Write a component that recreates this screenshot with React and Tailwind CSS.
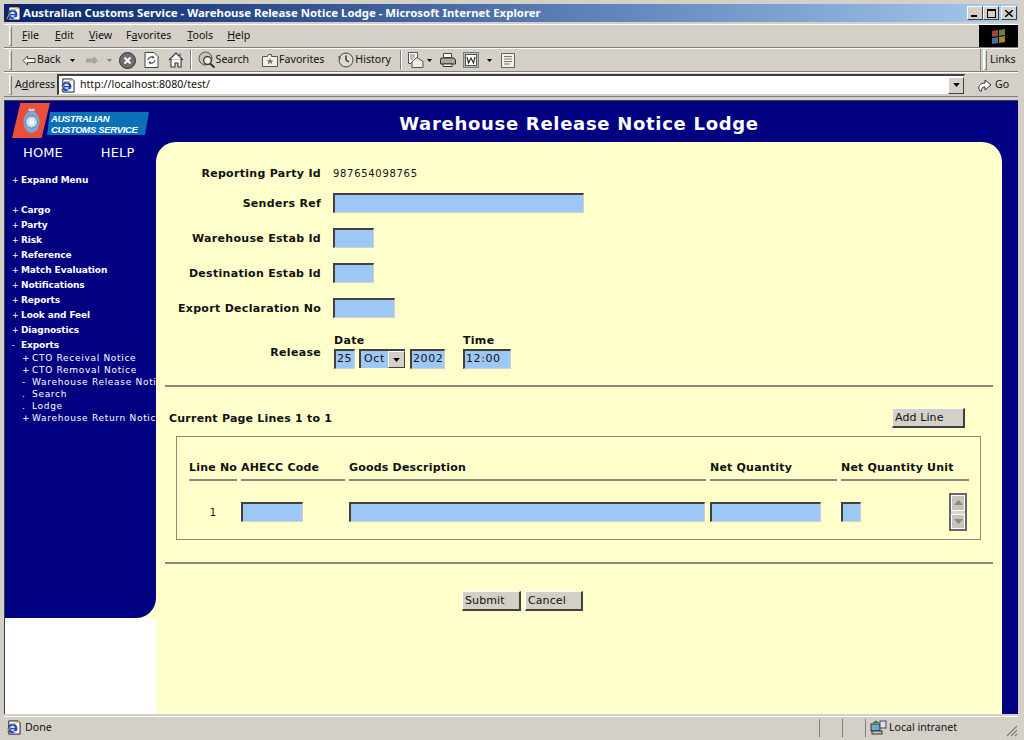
import React from "react";

const UI = { fontFamily: '"Noto Sans", "Open Sans", sans-serif' };
const WEB = { fontFamily: '"DejaVu Sans", Verdana, sans-serif' };

function IeIcon({ s = 16 }) {
  return (
    <svg width={s} height={s} viewBox="0 0 16 16" className="shrink-0">
      <path d="M3 1h10l2 2v12H3z" fill="#fff" stroke="#111" strokeWidth="1" />
      <circle cx="7" cy="9" r="5.2" fill="#1c48c8" />
      <circle cx="7" cy="9" r="2.6" fill="#fff" />
      <rect x="3" y="8.4" width="8" height="1.6" fill="#1c48c8" />
      <path d="M8 12h4v1.4H8z" fill="#fff" />
      <path d="M1 14C3 8 8 3 14 2" fill="none" stroke="#e8b020" strokeWidth="1" />
    </svg>
  );
}
const Grip = () => <div className="w-[3px] h-[20px] border-l border-t border-white border-r border-r-[#808080] border-b border-b-[#808080] shrink-0" />;
const Sep = () => <div className="w-[2px] h-[20px] border-l border-[#808080] bg-white shrink-0" />;
const Caret = ({ c = "#000", big }) => (
  <svg width={big ? 7 : 5} height={big ? 4 : 3} viewBox="0 0 5 3" className="shrink-0"><path d="M0 0h5L2.5 3z" fill={c} /></svg>
);

function WinBtn({ children }) {
  return <div className="w-[16px] h-[14px] bg-[#d4d0c8] border border-t-white border-l-white border-r-[#404040] border-b-[#404040] flex items-center justify-center">{children}</div>;
}

function Menu({ pre, u, post, ml }) {
  return <span className={ml}>{pre}<span className="underline">{u}</span>{post}</span>;
}

function Field({ w, h = "h-[20px]", children }) {
  return (
    <div className={`${w} ${h} bg-[#9dc8f5] border-t-2 border-l-2 border-t-[#404040] border-l-[#404040] border-r border-b border-r-[#d4d0c8] border-b-[#d4d0c8] text-[11px] tracking-[0.6px] text-[#111] leading-[16px] pl-[1px] overflow-hidden shrink-0`}>
      {children}
    </div>
  );
}

function Btn({ w, children }) {
  return (
    <div className={`${w} h-[20px] bg-[#d4d0c8] border border-t-white border-l-white border-r-[#404040] border-b-[#404040] border-r-2 border-b-2 text-[11px] tracking-[0.1px] text-[#111] flex items-center shrink-0 pl-[2px] pt-[1px]`}>
      {children}
    </div>
  );
}

const Label = ({ children }) => (
  <div className="w-[165px] text-right font-bold text-[11px] tracking-[0.3px] text-[#111] shrink-0 pt-[2px]">{children}</div>
);

function Row({ label, mt, children }) {
  return (
    <div className={`flex items-center gap-[12px] ${mt}`}>
      <Label>{label}</Label>
      {children}
    </div>
  );
}

const menuTop = ["Cargo", "Party", "Risk", "Reference", "Match Evaluation", "Notifications", "Reports", "Look and Feel", "Diagnostics"];
const menuSub = [["+", "CTO Receival Notice"], ["+", "CTO Removal Notice"], ["-", "Warehouse Release Notice"], [".", "Search"], [".", "Lodge"], ["+", "Warehouse Return Notice"]];

const TopItem = ({ sign = "+", children }) => (
  <div className="h-[15px] flex items-center font-bold text-[9px] tracking-[-0.1px] text-white whitespace-nowrap">
    <span className="w-[9px] pl-[1px] font-normal text-[8px] shrink-0">{sign}</span>
    <span className="ml-[1px]">{children}</span>
  </div>
);

const Head = ({ children }) => (
  <div className="border-b-2 border-b-[#8a8a78] h-[30px] pb-[3px] flex items-end font-bold text-[11px] tracking-[0.2px] text-[#111] whitespace-nowrap">{children}</div>
);

export default function App() {
  return (
    <div className="w-[1024px] h-[740px] bg-[#d4d0c8] overflow-hidden flex flex-col pt-[4px] pl-[4px] pr-[6px] pb-[2px]" style={UI}>
      {/* title bar */}
      <div className="h-[18px] shrink-0 flex items-center pl-[2px] pr-[1px] bg-gradient-to-r from-[#0a246a] to-[#a6caf0]">
        <IeIcon s={15} />
        <span className="ml-[2px] font-bold text-[11.4px] text-white whitespace-nowrap">Australian Customs Service - Warehouse Release Notice Lodge - Microsoft Internet Explorer</span>
        <div className="ml-auto flex items-center">
          <WinBtn><div className="w-[6px] h-[2px] bg-black mt-[6px] mr-[2px]" /></WinBtn>
          <WinBtn><div className="w-[9px] h-[9px] border border-black border-t-2" /></WinBtn>
          <div className="ml-[2px]"><WinBtn><svg width="8" height="7" viewBox="0 0 8 7"><path d="M0 0l8 7M8 0L0 7" stroke="#000" strokeWidth="1.4" /></svg></WinBtn></div>
        </div>
      </div>

      {/* menu row */}
      <div className="h-[24px] mt-[2px] shrink-0 flex items-center border-t border-white text-[10.6px] text-[#111] border-b border-b-[#808080]">
        <div className="ml-[5px]"><Grip /></div>
        <Menu ml="ml-[10px]" pre="" u="F" post="ile" />
        <Menu ml="ml-[16px]" pre="" u="E" post="dit" />
        <Menu ml="ml-[15px]" pre="" u="V" post="iew" />
        <Menu ml="ml-[14px]" pre="F" u="a" post="vorites" />
        <Menu ml="ml-[16px]" pre="" u="T" post="ools" />
        <Menu ml="ml-[14px]" pre="" u="H" post="elp" />
        <div className="ml-auto w-[39px] h-[22px] bg-black flex items-center justify-center">
          <svg width="16" height="15" viewBox="0 0 16 15">
            <path d="M1 2l6-1v6l-6 1z" fill="#c8584c" opacity="0.8" />
            <path d="M8 1l6-1v6l-6 1z" fill="#7ea04a" opacity="0.8" />
            <path d="M1 9l6-1v6l-6 1z" fill="#5c88c8" opacity="0.8" />
            <path d="M8 8l6-1v6l-6 1z" fill="#d0a838" opacity="0.8" />
          </svg>
        </div>
      </div>

      {/* toolbar */}
      <div className="h-[24px] shrink-0 flex items-center border-t border-white border-b border-b-[#808080] text-[10.6px] text-[#111]">
        <div className="ml-[5px]"><Grip /></div>
        <svg className="ml-[10px]" width="14" height="11" viewBox="0 0 14 11"><path d="M5.5 1L1 5.5 5.5 10V7.5H13v-4H5.5z" fill="#fff" stroke="#444" /></svg>
        <span className="ml-[1px]">Back</span>
        <div className="ml-[9px]"><Caret /></div>
        <svg className="ml-[10px]" width="14" height="11" viewBox="0 0 14 11"><path d="M8.5 1L13 5.5 8.5 10V7.5H1v-4h7.5z" fill="#a8a49c" /></svg>
        <div className="ml-[8px]"><Caret c="#808080" /></div>
        <svg className="ml-[7px]" width="17" height="17" viewBox="0 0 17 17"><circle cx="8.5" cy="8.5" r="8" fill="#6e6e6e" stroke="#333" /><path d="M5.5 5.5l6 6M11.5 5.5l-6 6" stroke="#fff" strokeWidth="2" /></svg>
        <svg className="ml-[8px]" width="15" height="16" viewBox="0 0 15 16"><path d="M1 .5h9l4 4v11H1z" fill="#fff" stroke="#444" /><path d="M4 8a3.5 3.5 0 0 1 6-2M11 8a3.5 3.5 0 0 1-6 2" fill="none" stroke="#555" strokeWidth="1.2" /><path d="M9 3.5l1.5 3-3-.5zM6 12.500l-1.500-3 3 .5z" fill="#555" /></svg>
        <svg className="ml-[9px]" width="16" height="16" viewBox="0 0 16 16"><path d="M1 8l7-7 7 7M3 7v8h4v-4h3v4h3V7" fill="#fff" stroke="#333" strokeWidth="1.1" /><rect x="11" y="1.500" width="2" height="4" fill="#777" /></svg>
        <div className="ml-[6px]"><Sep /></div>
        <svg className="ml-[6px]" width="18" height="18" viewBox="0 0 18 18"><circle cx="7.500" cy="7.500" r="6.500" fill="#c4c4bc" stroke="#555" /><circle cx="9.500" cy="9.500" r="3.800" fill="#e8f0f0" stroke="#333" strokeWidth="1.300" /><path d="M12 12.500l4.500 4" stroke="#333" strokeWidth="2" /></svg>
        <span>Search</span>
        <svg className="ml-[13px]" width="16" height="14" viewBox="0 0 16 14"><path d="M.5 3.500h5l1-2h3v2h6v10H.5z" fill="#f4f0e4" stroke="#555" /><path d="M8 5l1 2.300 2.400.2-1.800 1.500.6 2.300L8 9.800 5.800 11.300l.6-2.300-1.800-1.500 2.400-.2z" fill="#777" /></svg>
        <span className="ml-[1px]">Favorites</span>
        <svg className="ml-[13px]" width="18" height="16" viewBox="0 0 18 16"><circle cx="9" cy="8" r="7" fill="#dcdcd4" stroke="#444" /><path d="M9 3.500V8l3 2" fill="none" stroke="#222" strokeWidth="1.300" /><path d="M1 4l3 1-1 3z" fill="#555" /></svg>
        <span>History</span>
        <div className="ml-[9px]"><Sep /></div>
        <svg className="ml-[6px]" width="17" height="16" viewBox="0 0 17 16"><path d="M.5.5h9v6h-2L3 11.500H.5z" fill="#fff" stroke="#555" /><path d="M2 3h5M2 5h5M2 7h3" stroke="#777" /><path d="M4 9.500l5-4 6 4v6H4z" fill="#f0ece0" stroke="#555" /></svg>
        <div className="ml-[2px]"><Caret /></div>
        <svg className="ml-[8px]" width="16" height="14" viewBox="0 0 16 14"><path d="M3.500.5h8v4h-8z" fill="#fff" stroke="#444" /><path d="M1 5h13l1.500 2v4H.5V7z" fill="#a8a8a0" stroke="#333" /><path d="M3 11h9v2.500H3z" fill="#fff" stroke="#333" /></svg>
        <svg className="ml-[7px]" width="16" height="16" viewBox="0 0 16 16"><rect x=".5" y=".5" width="15" height="15" fill="#b8b8b0" stroke="#333" strokeDasharray="1 1" /><rect x="2.500" y="2.500" width="11" height="11" fill="#fff" stroke="#555" /><path d="M4 5l1.500 6L8 6l2.500 5L12 5" fill="none" stroke="#333" strokeWidth="1.200" /></svg>
        <div className="ml-[8px]"><Caret /></div>
        <svg className="ml-[9px]" width="14" height="15" viewBox="0 0 14 15"><path d="M.5.5h13v14H.5z" fill="#f4f0e4" stroke="#666" /><path d="M3 3.500h8M3 6h8M3 8.500h8M3 11h6" stroke="#777" /></svg>
        <div className="ml-auto flex items-center h-full border-l border-[#808080] pl-[2px] w-[38px]">
          <div className="border-l border-white"><Grip /></div>
          <span className="ml-[3px]">Links</span>
        </div>
      </div>

      {/* address row */}
      <div className="h-[25px] shrink-0 flex items-center border-t border-white border-b border-b-[#808080] text-[10.6px] text-[#111]">
        <div className="ml-[5px]"><Grip /></div>
        <span className="ml-[3px] w-[39px]">A<span className="underline">d</span>dress</span>
        <div className="ml-[3px] w-[908px] h-[21px] bg-white border-t-2 border-l-2 border-t-[#404040] border-l-[#404040] border-b border-r border-[#d4d0c8] flex items-center pl-[1px]">
          <IeIcon s={15} />
          <span className="ml-[5px] whitespace-nowrap">http://localhost:8080/test/</span>
          <div className="ml-auto w-[16px] h-[17px] bg-[#d4d0c8] border border-t-white border-l-white border-r-[#404040] border-b-[#404040] flex items-center justify-center"><Caret big /></div>
        </div>
        <svg className="ml-[12px]" width="17" height="17" viewBox="0 0 17 17"><path d="M3 15c-3-4 0-8 5-8V4l6 5-6 5v-3C5 11 4 13 4.500 15z" fill="#fff" stroke="#333" /></svg>
        <span className="ml-[1px]">Go</span>
      </div>

      {/* content */}
      <div className="h-[614px] mt-[3px] shrink-0 flex border-l border-l-[#404040] border-t border-t-[#404040] overflow-hidden">
        {/* sidebar */}
        <div className="w-[151px] shrink-0 flex flex-col bg-white" style={WEB}>
          <div className="h-[517px] bg-[#ffffcc] shrink-0">
            <div className="h-full bg-[#000080] rounded-br-[20px] flex flex-col overflow-hidden">
              {/* logo */}
              <div className="h-[38px] mt-[2px] ml-[7px] shrink-0 flex items-start">
                <div className="w-[38px] h-[35px] bg-[#e8503c] [clip-path:polygon(22%_0,100%_0,78%_100%,0_100%)] flex items-center justify-center shrink-0">
                  <svg width="17" height="27" viewBox="0 0 17 27">
                    <path d="M5 4l1.500-3 2 1.500 2-1.500L12 4z" fill="#c8d8e8" />
                    <ellipse cx="8.500" cy="15" rx="8" ry="11" fill="#7ea8d0" />
                    <circle cx="8.500" cy="15" r="6" fill="#c8dcec" stroke="#5a88b8" />
                    <circle cx="8.500" cy="15" r="3" fill="#f4f8fb" />
                  </svg>
                </div>
                <div className="-ml-[3px] mt-[9px] w-[102px] h-[23px] bg-[#0a70b8] [clip-path:polygon(3%_0,100%_0,96%_100%,0_100%)] pl-[4px] pt-[1px] text-white italic font-bold text-[9.5px] tracking-[-0.35px] leading-[11px] whitespace-nowrap" style={{ fontFamily: '"Liberation Sans", Arial, sans-serif' }}>
                  <div>AUSTRALIAN</div>
                  <div>CUSTOMS SERVICE</div>
                </div>
              </div>
              <div className="mt-[3px] h-[18px] flex items-center text-white text-[13px] tracking-[0.1px] whitespace-nowrap shrink-0">
                <span className="ml-[18px]">HOME</span>
                <span className="ml-[38px]">HELP</span>
              </div>
              <div className="mt-[11px] ml-[6px] shrink-0"><TopItem>Expand Menu</TopItem></div>
              <div className="mt-[15px] ml-[6px] shrink-0 flex flex-col">
                {menuTop.map((m) => <TopItem key={m}>{m}</TopItem>)}
                <TopItem sign="-">Exports</TopItem>
              </div>
              <div className="ml-[16px] flex flex-col text-[9px] tracking-[0.7px] text-white">
                {menuSub.map(([s, t]) => (
                  <div key={t} className="h-[12px] flex items-center whitespace-nowrap">
                    <span className="w-[11px] pl-[1px] shrink-0">{s}</span><span className="shrink-0">{t}</span>
                  </div>
                ))}
              </div>
            </div>
          </div>
        </div>

        {/* main column */}
        <div className="flex-1 min-w-0 flex flex-col bg-[#000080] pr-[16px]" style={WEB}>
          <div className="h-[41px] shrink-0 flex items-center justify-center text-white font-bold text-[18px] tracking-[0.7px] whitespace-nowrap pt-[3px]">Warehouse Release Notice Lodge</div>
          <div className="flex-1 bg-[#ffffcc] rounded-t-[20px] flex flex-col pl-[9px] pr-[9px] pt-[21px]">
            <div className="-ml-[9px] flex flex-col">
              <Row label="Reporting Party Id"><span className="text-[10px] tracking-[0.7px] text-[#111] h-[20px] leading-[18px] pt-[2px]">987654098765</span></Row>
              <Row label="Senders Ref" mt="mt-[10px]"><Field w="w-[251px]" /></Row>
              <Row label="Warehouse Estab Id" mt="mt-[15px]"><Field w="w-[41px]" /></Row>
              <Row label="Destination Estab Id" mt="mt-[15px]"><Field w="w-[41px]" /></Row>
              <Row label="Export Declaration No" mt="mt-[15px]"><Field w="w-[62px]" /></Row>
              <div className="flex items-center gap-[12px] mt-[15px]">
                <div className="mt-[3px]"><Label>Release</Label></div>
                <div className="flex flex-col ml-[1px]">
                  <div className="flex font-bold text-[11px] tracking-[0.3px] text-[#111] h-[14px] leading-[14px] pt-[1px]">
                    <span className="w-[129px]">Date</span><span>Time</span>
                  </div>
                  <div className="flex mt-[2px]">
                    <Field w="w-[21px]">25</Field>
                    <div className="ml-[4px] w-[46px] h-[19px] bg-[#9dc8f5] border-t-2 border-l-2 border-[#404040] flex items-center justify-between text-[11px] tracking-[0.6px] text-[#111] shrink-0 pl-[3px]">
                      Oct
                      <div className="w-[17px] h-[17px] bg-[#d4d0c8] border border-t-white border-l-white border-r-[#404040] border-b-[#404040] flex items-center justify-center"><Caret big /></div>
                    </div>
                    <div className="ml-[5px]"><Field w="w-[35px]">2002</Field></div>
                    <div className="ml-[18px]"><Field w="w-[48px]">12:00</Field></div>
                  </div>
                </div>
              </div>
            </div>

            <div className="mt-[16px] border-t-2 border-t-[#8a8a78]" />

            <div className="mt-[20px] h-[22px] flex items-center pl-[4px] pr-[28px] justify-between">
              <span className="font-bold text-[11px] tracking-[0.22px] text-[#111] pt-[2px]">Current Page Lines 1 to 1</span>
              <Btn w="w-[73px]">Add Line</Btn>
            </div>

            <div className="mt-[7px] ml-[11px] mr-[12px] h-[104px] border border-[#8a8a78] pl-[12px] pt-[14px]">
              <div className="grid grid-cols-[48px_104px_357px_127px_128px] gap-x-[4px]">
                <Head>Line No</Head>
                <Head>AHECC Code</Head>
                <Head>Goods Description</Head>
                <Head>Net Quantity</Head>
                <Head>Net Quantity Unit</Head>
              </div>
              <div className="grid grid-cols-[48px_104px_357px_127px_128px] gap-x-[4px] mt-[21px] items-center">
                <div className="text-center text-[10px] text-[#111]">1</div>
                <Field w="w-[62px]" />
                <Field w="w-[356px]" />
                <Field w="w-[111px]" />
                <div className="flex items-center justify-between relative">
                  <Field w="w-[20px]" />
                  <div className="absolute left-[108px] -top-[9px] w-[18px] h-[38px] flex flex-col border-2 border-[#666] bg-[#d8d4cc]">
                    <div className="flex-1 bg-[#c8c4bc] border border-white flex items-center justify-center"><svg width="9" height="5" viewBox="0 0 9 5"><path d="M0 5h9L4.500 0z" fill="#8a8a82" /></svg></div>
                    <div className="h-[3px]" />
                    <div className="flex-1 bg-[#c8c4bc] border border-white flex items-center justify-center"><svg width="9" height="5" viewBox="0 0 9 5"><path d="M0 0h9L4.500 5z" fill="#8a8a82" /></svg></div>
                  </div>
                </div>
              </div>
            </div>

            <div className="mt-[22px] border-t-2 border-t-[#8a8a78]" />

            <div className="mt-[27px] ml-[297px] flex gap-[4px]">
              <Btn w="w-[59px]">Submit</Btn>
              <Btn w="w-[58px]">Cancel</Btn>
            </div>
          </div>
        </div>
      </div>

      {/* status bar */}
      <div className="flex-1 min-h-0 mt-[2px] flex items-center border-t border-white text-[10.6px] text-[#111]">
        <div className="ml-[2px]"><IeIcon s={15} /></div>
        <span className="ml-[4px]">Done</span>
        <div className="ml-auto flex items-center h-[18px]">
          <div className="w-[23px] h-full border-l border-[#808080]" />
          <div className="w-[23px] h-full border-l border-[#808080]" />
          <div className="w-[153px] h-full border-l border-[#808080] flex items-center pl-[4px]">
            <svg width="17" height="16" viewBox="0 0 17 16"><rect x="1" y="4" width="9" height="7" fill="#6aa8d8" stroke="#333" /><rect x="2" y="11" width="10" height="3" fill="#c8c4bc" stroke="#333" /><rect x="10" y="1" width="6" height="7" fill="#d8e4f0" stroke="#444" /><path d="M3 3l3-2 3 2" fill="#3a8a4a" stroke="#2a6a3a" /></svg>
            <span className="ml-[2px]">Local intranet</span>
            <svg className="ml-auto self-end" width="12" height="12" viewBox="0 0 12 12"><path d="M11 1L1 11M11 5l-6 6M11 9l-2 2" stroke="#808080" strokeWidth="1.200" /></svg>
          </div>
        </div>
      </div>
    </div>
  );
}
